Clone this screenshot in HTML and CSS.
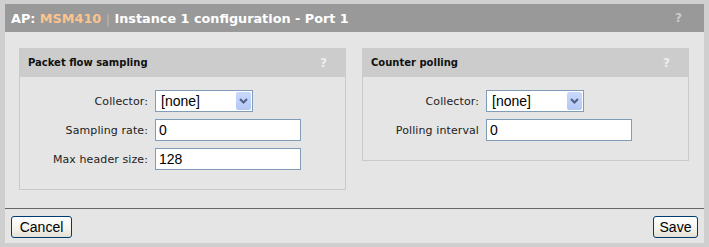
FILE: index.html
```html
<html>
<head>
  <title>Instance 1 configuration - Port 1</title>
  <link rel="stylesheet" href="styles.css">
</head>
<body>
  <div class="window">
    <div class="titlebar">
      <h1 class="title">AP: <span class="ap-name">MSM410</span> <span class="sep">|</span> Instance 1 configuration - Port 1</h1>
      <span class="help help-title">?</span>
    </div>
    <div class="content">
      <section class="panel panel-sampling">
        <div class="panel-head">
          <h2 class="panel-title">Packet flow sampling</h2>
          <span class="help">?</span>
        </div>
        <div class="panel-body">
          <div class="row">
            <label class="field-label">Collector:</label>
            <span class="select">
              <span class="select-value">[none]</span>
              <span class="select-btn">
                <svg width="9" height="6" viewBox="0 0 9 6"><path d="M1 1 L4.5 4.5 L8 1" fill="none" stroke="#4d6185" stroke-width="2"/></svg>
              </span>
            </span>
          </div>
          <div class="row">
            <label class="field-label">Sampling rate:</label>
            <input class="text-input" type="text" value="0">
          </div>
          <div class="row">
            <label class="field-label">Max header size:</label>
            <input class="text-input" type="text" value="128">
          </div>
        </div>
      </section>
      <section class="panel panel-polling">
        <div class="panel-head">
          <h2 class="panel-title">Counter polling</h2>
          <span class="help">?</span>
        </div>
        <div class="panel-body">
          <div class="row">
            <label class="field-label">Collector:</label>
            <span class="select">
              <span class="select-value">[none]</span>
              <span class="select-btn">
                <svg width="9" height="6" viewBox="0 0 9 6"><path d="M1 1 L4.5 4.5 L8 1" fill="none" stroke="#4d6185" stroke-width="2"/></svg>
              </span>
            </span>
          </div>
          <div class="row">
            <label class="field-label">Polling interval</label>
            <input class="text-input" type="text" value="0">
          </div>
        </div>
      </section>
    </div>
    <div class="footer">
      <button class="btn btn-cancel">Cancel</button>
      <button class="btn btn-save">Save</button>
    </div>
  </div>
</body>
</html>
```

FILE: styles.css
```css
/* fond extérieur gris clair autour de la fenêtre */
body {
  margin: 0;
  background: #cfcfcf;
  font-family: "DejaVu Sans", Verdana, sans-serif;
  font-size: 11px;
  color: #222;
}
.window {
  margin: 4px 5px;
  height: 239px;
  background: #e5e5e5;
  display: flex;
  flex-direction: column;
}
/* barre de titre */
.titlebar {
  height: 28px;
  background: #999;
  display: flex;
  align-items: center;
  justify-content: space-between;
  padding: 0 22px 0 6px;
}
.title {
  margin: 0;
  font-size: 12.8px;
  font-weight: bold;
  color: #fff;
}
.ap-name {
  color: #fbc38f;
}
.sep {
  color: #bbb;
  font-weight: normal;
}
.help {
  font-weight: bold;
  font-size: 12px;
  color: #eee;
}
.help-title {
  color: #ccc;
}
/* zone des deux panneaux */
.content {
  flex: 1;
  display: flex;
  gap: 16px;
  align-items: flex-start;
  padding: 16px 15px 0 14px;
}
.panel {
  width: 327px;
}
.panel-head {
  height: 29px;
  background: #ccc;
  display: flex;
  align-items: center;
  justify-content: space-between;
  padding: 0 19px 0 9px;
}
.panel-title {
  margin: 0;
  font-size: 10px;
  font-weight: bold;
  color: #111;
}
.panel-body {
  border: 1px solid #c9c9c9;
  border-top: none;
  padding: 13px 0 19px;
  display: flex;
  flex-direction: column;
  gap: 7px;
}
.row {
  display: flex;
  align-items: center;
  gap: 7px;
}
.field-label {
  text-align: right;
  letter-spacing: 0.1px;
}
.panel-sampling .field-label {
  width: 128px;
}
.panel-polling .field-label {
  width: 116px;
}
/* champs façon XP */
.text-input {
  width: 146px;
  height: 22px;
  box-sizing: border-box;
  border: 1px solid #7f9db9;
  padding: 0 3px;
  font-family: "Liberation Sans", Arial, sans-serif;
  font-size: 14px;
  color: #000;
  background: #fff;
}
.select {
  width: 98px;
  height: 22px;
  box-sizing: border-box;
  border: 1px solid #7f9db9;
  background: #fff;
  display: flex;
  align-items: center;
  justify-content: space-between;
  padding: 1px;
  font-family: "Liberation Sans", Arial, sans-serif;
  font-size: 14px;
  color: #000;
}
.select-value {
  padding-left: 4px;
}
.select-btn {
  width: 15px;
  height: 18px;
  background: linear-gradient(#c9d8fc, #b4c8f5);
  border-radius: 2px;
  display: flex;
  align-items: center;
  justify-content: center;
}
/* pied avec boutons */
.footer {
  border-top: 1px solid #666;
  height: 35px;
  box-sizing: border-box;
  display: flex;
  align-items: flex-start;
  justify-content: space-between;
  padding: 7px 6px 0 6px;
}
.btn {
  height: 22px;
  padding: 0;
  border: 1px solid #003c74;
  border-radius: 3px;
  background: linear-gradient(#fff, #f3f2ec 60%, #e3e0d2);
  font-family: "Liberation Sans", Arial, sans-serif;
  font-size: 14px;
  color: #000;
}
.btn-cancel {
  width: 61px;
}
.btn-save {
  width: 45px;
}
```
